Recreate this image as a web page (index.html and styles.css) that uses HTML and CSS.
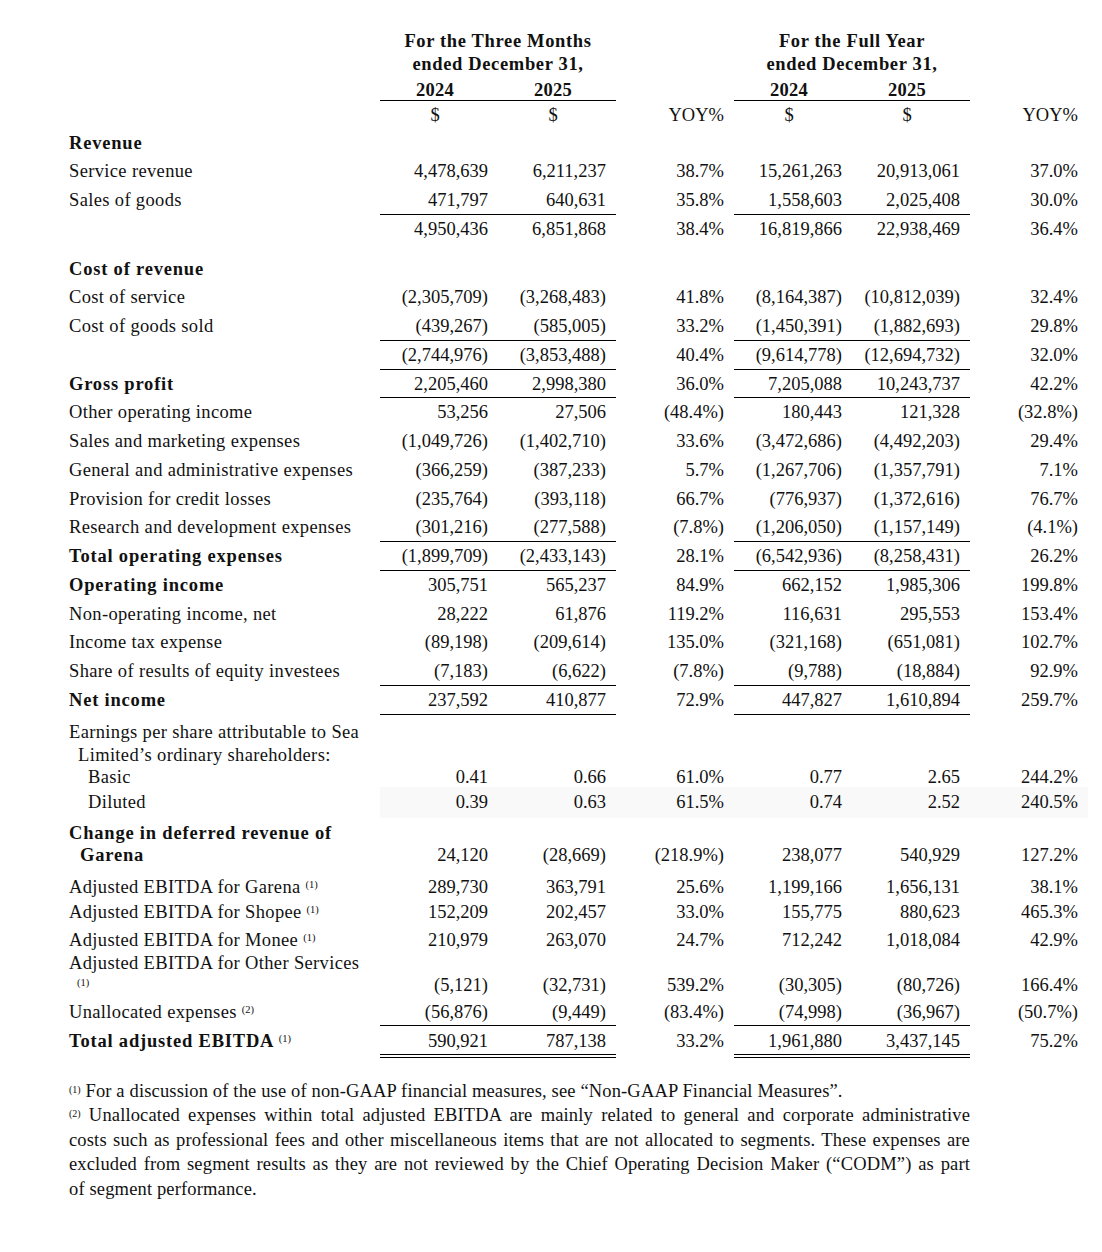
FILE: index.html
```html
<!DOCTYPE html>
<html lang="en">
<head>
<meta charset="utf-8">
<title>Sea Limited – Financial Summary</title>
<link rel="stylesheet" href="styles.css">
</head>
<body>
<div class="page">
  <table class="fin">
    <colgroup>
      <col class="w-label"><col class="w-num"><col class="w-num"><col class="w-num"><col class="w-num"><col class="w-num"><col class="w-num">
    </colgroup>
    <tbody>
      <tr class="r-head">
        <td></td>
        <td colspan="2" class="hd">For the Three Months<br>ended December 31,</td>
        <td></td>
        <td colspan="2" class="hd">For the Full Year<br>ended December 31,</td>
        <td></td>
      </tr>
      <tr class="r-years">
        <td></td>
        <td class="yr ul">2024</td><td class="yr ul">2025</td>
        <td></td>
        <td class="yr ul">2024</td><td class="yr ul">2025</td>
        <td></td>
      </tr>
      <tr class="r-cur">
        <td></td>
        <td class="yr">$</td><td class="yr">$</td>
        <td class="n">YOY%</td>
        <td class="yr">$</td><td class="yr">$</td>
        <td class="n">YOY%</td>
      </tr>
      <tr><td class="lb b">Revenue</td><td></td><td></td><td></td><td></td><td></td><td></td></tr>
      <tr><td class="lb">Service revenue</td><td class="n">4,478,639</td><td class="n">6,211,237</td><td class="n">38.7%</td><td class="n">15,261,263</td><td class="n">20,913,061</td><td class="n">37.0%</td></tr>
      <tr><td class="lb">Sales of goods</td><td class="n ul">471,797</td><td class="n ul">640,631</td><td class="n">35.8%</td><td class="n ul">1,558,603</td><td class="n ul">2,025,408</td><td class="n">30.0%</td></tr>
      <tr><td class="lb"></td><td class="n">4,950,436</td><td class="n">6,851,868</td><td class="n">38.4%</td><td class="n">16,819,866</td><td class="n">22,938,469</td><td class="n">36.4%</td></tr>
      <tr class="r-spacer"><td></td><td></td><td></td><td></td><td></td><td></td><td></td></tr>
      <tr><td class="lb b">Cost of revenue</td><td></td><td></td><td></td><td></td><td></td><td></td></tr>
      <tr><td class="lb">Cost of service</td><td class="n">(2,305,709)</td><td class="n">(3,268,483)</td><td class="n">41.8%</td><td class="n">(8,164,387)</td><td class="n">(10,812,039)</td><td class="n">32.4%</td></tr>
      <tr><td class="lb">Cost of goods sold</td><td class="n ul">(439,267)</td><td class="n ul">(585,005)</td><td class="n">33.2%</td><td class="n ul">(1,450,391)</td><td class="n ul">(1,882,693)</td><td class="n">29.8%</td></tr>
      <tr><td class="lb"></td><td class="n ul">(2,744,976)</td><td class="n ul">(3,853,488)</td><td class="n">40.4%</td><td class="n ul">(9,614,778)</td><td class="n ul">(12,694,732)</td><td class="n">32.0%</td></tr>
      <tr><td class="lb b">Gross profit</td><td class="n ul">2,205,460</td><td class="n ul">2,998,380</td><td class="n">36.0%</td><td class="n ul">7,205,088</td><td class="n ul">10,243,737</td><td class="n">42.2%</td></tr>
      <tr><td class="lb">Other operating income</td><td class="n">53,256</td><td class="n">27,506</td><td class="n">(48.4%)</td><td class="n">180,443</td><td class="n">121,328</td><td class="n">(32.8%)</td></tr>
      <tr><td class="lb">Sales and marketing expenses</td><td class="n">(1,049,726)</td><td class="n">(1,402,710)</td><td class="n">33.6%</td><td class="n">(3,472,686)</td><td class="n">(4,492,203)</td><td class="n">29.4%</td></tr>
      <tr><td class="lb">General and administrative expenses</td><td class="n">(366,259)</td><td class="n">(387,233)</td><td class="n">5.7%</td><td class="n">(1,267,706)</td><td class="n">(1,357,791)</td><td class="n">7.1%</td></tr>
      <tr><td class="lb">Provision for credit losses</td><td class="n">(235,764)</td><td class="n">(393,118)</td><td class="n">66.7%</td><td class="n">(776,937)</td><td class="n">(1,372,616)</td><td class="n">76.7%</td></tr>
      <tr><td class="lb">Research and development expenses</td><td class="n ul">(301,216)</td><td class="n ul">(277,588)</td><td class="n">(7.8%)</td><td class="n ul">(1,206,050)</td><td class="n ul">(1,157,149)</td><td class="n">(4.1%)</td></tr>
      <tr><td class="lb b">Total operating expenses</td><td class="n ul">(1,899,709)</td><td class="n ul">(2,433,143)</td><td class="n">28.1%</td><td class="n ul">(6,542,936)</td><td class="n ul">(8,258,431)</td><td class="n">26.2%</td></tr>
      <tr><td class="lb b">Operating income</td><td class="n">305,751</td><td class="n">565,237</td><td class="n">84.9%</td><td class="n">662,152</td><td class="n">1,985,306</td><td class="n">199.8%</td></tr>
      <tr><td class="lb">Non-operating income, net</td><td class="n">28,222</td><td class="n">61,876</td><td class="n">119.2%</td><td class="n">116,631</td><td class="n">295,553</td><td class="n">153.4%</td></tr>
      <tr><td class="lb">Income tax expense</td><td class="n">(89,198)</td><td class="n">(209,614)</td><td class="n">135.0%</td><td class="n">(321,168)</td><td class="n">(651,081)</td><td class="n">102.7%</td></tr>
      <tr><td class="lb">Share of results of equity investees</td><td class="n ul">(7,183)</td><td class="n ul">(6,622)</td><td class="n">(7.8%)</td><td class="n ul">(9,788)</td><td class="n ul">(18,884)</td><td class="n">92.9%</td></tr>
      <tr><td class="lb b">Net income</td><td class="n ul">237,592</td><td class="n ul">410,877</td><td class="n">72.9%</td><td class="n ul">447,827</td><td class="n ul">1,610,894</td><td class="n">259.7%</td></tr>
      <tr class="r-eps"><td class="lb">Earnings per share attributable to Sea<br><span class="ind1">Limited’s ordinary shareholders:</span></td><td></td><td></td><td></td><td></td><td></td><td></td></tr>
      <tr class="r-basic"><td class="lb"><span class="ind2">Basic</span></td><td class="n">0.41</td><td class="n">0.66</td><td class="n">61.0%</td><td class="n">0.77</td><td class="n">2.65</td><td class="n">244.2%</td></tr>
      <tr class="r-diluted"><td class="lb"><span class="ind2">Diluted</span></td><td class="n sh">0.39</td><td class="n sh">0.63</td><td class="n sh">61.5%</td><td class="n sh">0.74</td><td class="n sh">2.52</td><td class="n sh">240.5%</td></tr>
      <tr class="r-change"><td class="lb b">Change in deferred revenue of<br><span class="ind3">Garena</span></td><td class="n">24,120</td><td class="n">(28,669)</td><td class="n">(218.9%)</td><td class="n">238,077</td><td class="n">540,929</td><td class="n">127.2%</td></tr>
      <tr class="r-garena"><td class="lb">Adjusted EBITDA for Garena <sup>(1)</sup></td><td class="n">289,730</td><td class="n">363,791</td><td class="n">25.6%</td><td class="n">1,199,166</td><td class="n">1,656,131</td><td class="n">38.1%</td></tr>
      <tr class="r-shopee"><td class="lb">Adjusted EBITDA for Shopee <sup>(1)</sup></td><td class="n">152,209</td><td class="n">202,457</td><td class="n">33.0%</td><td class="n">155,775</td><td class="n">880,623</td><td class="n">465.3%</td></tr>
      <tr class="r-monee"><td class="lb">Adjusted EBITDA for Monee <sup>(1)</sup></td><td class="n">210,979</td><td class="n">263,070</td><td class="n">24.7%</td><td class="n">712,242</td><td class="n">1,018,084</td><td class="n">42.9%</td></tr>
      <tr class="r-other"><td class="lb">Adjusted EBITDA for Other Services<br><span class="ind4"><sup>(1)</sup></span></td><td class="n">(5,121)</td><td class="n">(32,731)</td><td class="n">539.2%</td><td class="n">(30,305)</td><td class="n">(80,726)</td><td class="n">166.4%</td></tr>
      <tr class="r-unalloc"><td class="lb">Unallocated expenses <sup>(2)</sup></td><td class="n ul">(56,876)</td><td class="n ul">(9,449)</td><td class="n">(83.4%)</td><td class="n ul">(74,998)</td><td class="n ul">(36,967)</td><td class="n">(50.7%)</td></tr>
      <tr class="r-total"><td class="lb b">Total adjusted EBITDA <sup>(1)</sup></td><td class="n dul">590,921</td><td class="n dul">787,138</td><td class="n">33.2%</td><td class="n dul">1,961,880</td><td class="n dul">3,437,145</td><td class="n">75.2%</td></tr>
    </tbody>
  </table>

  <div class="notes">
    <p class="note"><sup>(1)</sup> For a discussion of the use of non-GAAP financial measures, see “Non-GAAP Financial Measures”.</p>
    <p class="note"><span class="jline"><sup>(2)</sup> Unallocated expenses within total adjusted EBITDA are mainly related to general and corporate administrative</span> costs such as professional fees and other miscellaneous items that are not allocated to segments. These expenses are excluded from segment results as they are not reviewed by the Chief Operating Decision Maker (“CODM”) as part of&nbsp;segment performance.</p>
  </div>
</div>
</body>
</html>
```

FILE: styles.css
```css
html, body {
  margin: 0;
  padding: 0;
  background: #ffffff;
}

body {
  font-family: "Liberation Serif", "Times New Roman", serif;
  font-size: 18.5px;
  color: #111111;
}

.page {
  padding: 29.5px 0 40px 69px;
}

.fin {
  border-collapse: collapse;
  table-layout: fixed;
  width: 1019px;
}

.w-label { width: 311px; }
.w-num { width: 118px; }

.fin td {
  padding: 0;
  line-height: 28.75px;
  vertical-align: middle;
  white-space: nowrap;
}

.fin td.n {
  text-align: right;
  padding-right: 10px;
}

.fin td.lb {
  text-align: left;
  letter-spacing: 0.35px;
}

.fin td.b,
.b {
  font-weight: bold;
  letter-spacing: 0.8px;
}

/* rules drawn as backgrounds so they add no height to rows */
.ul {
  background: linear-gradient(#000000, #000000) left bottom / 100% 1px no-repeat;
}

.dul {
  background:
    linear-gradient(#000000, #000000) left bottom / 100% 1px no-repeat,
    linear-gradient(#000000, #000000) left calc(100% - 3px) / 100% 1px no-repeat;
}

.sh {
  background: #f9f9f9;
}

/* header rows */
.r-head td {
  line-height: 23px;
}

.hd {
  text-align: center;
  font-weight: bold;
  letter-spacing: 0.65px;
}

.fin td.yr {
  text-align: center;
  padding-right: 8px;
}

.r-years td {
  line-height: 22px;
  padding-top: 3.5px;
  vertical-align: bottom;
  font-weight: bold;
  letter-spacing: 0.3px;
}

.r-cur td {
  line-height: 22px;
  padding-top: 3px;
  padding-bottom: 2.6px;
}

.r-spacer td {
  line-height: 11px;
  height: 11px;
}

/* EPS block */
.r-eps td {
  line-height: 23px;
  padding-top: 6px;
}

.r-basic td { line-height: 20px; }
.r-diluted td { line-height: 31px; }

.r-change td {
  line-height: 22px;
  padding-top: 4px;
  vertical-align: bottom;
}

.r-garena td {
  line-height: 22px;
  padding-top: 10px;
  padding-bottom: 2px;
}

.r-shopee td { line-height: 24px; }

.r-monee td {
  line-height: 22px;
  padding-top: 5px;
  padding-bottom: 1px;
}

.r-other td {
  line-height: 22px;
  vertical-align: bottom;
}

.r-unalloc td {
  line-height: 28px;
  padding-top: 2px;
}

.r-total td {
  line-height: 28px;
  padding-top: 1px;
  padding-bottom: 3px;
}

.ind1 { padding-left: 9px; }
.ind2 { padding-left: 19px; }
.ind3 { padding-left: 11px; }
.ind4 { padding-left: 8px; }

sup {
  font-size: 10.5px;
  line-height: 0;
  vertical-align: 5px;
  letter-spacing: 0;
  font-weight: normal;
}

/* footnotes */
.notes {
  width: 901px;
  margin-top: 21px;
}

.note {
  margin: 0;
  font-size: 18.5px;
  line-height: 24.5px;
  text-align: justify;
  letter-spacing: 0.15px;
}

.jline {
  display: block;
  text-align-last: justify;
}

.note sup {
  font-size: 10px;
  vertical-align: 4px;
}
```
